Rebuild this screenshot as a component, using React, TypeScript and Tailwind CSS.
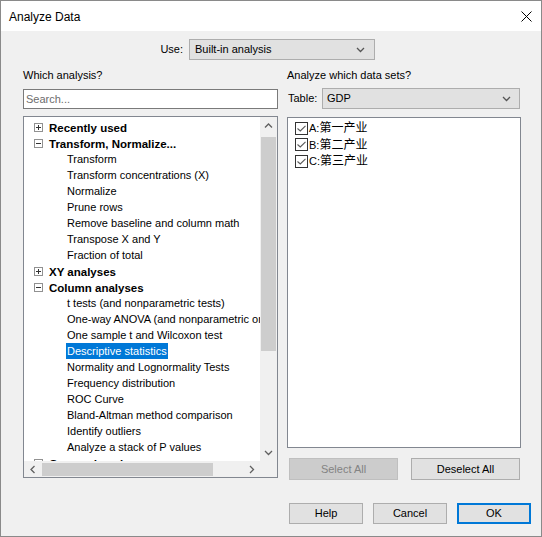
import React from "react";

const font = "font-['Liberation_Sans','Noto_Sans_CJK_SC',sans-serif]";

function Chevron({ dir = "down", className = "" }: { dir?: "down" | "up" | "left" | "right"; className?: string }) {
  const paths: Record<string, string> = {
    down: "M1 1 L4.5 4.5 L8 1",
    up: "M1 4.5 L4.5 1 L8 4.5",
    left: "M4.5 1 L1 4.5 L4.5 8",
    right: "M1 1 L4.5 4.5 L1 8",
  };
  const horiz = dir === "left" || dir === "right";
  return (
    <svg width={horiz ? 6 : 9} height={horiz ? 9 : 6} viewBox={horiz ? "0 0 6 9" : "0 0 9 6"} className={className}>
      <path d={paths[dir]} fill="none" stroke="currentColor" strokeWidth="1.3" />
    </svg>
  );
}

function Expander({ open }: { open: boolean }) {
  return (
    <span className="w-[9px] h-[9px] border border-[#919191] bg-white flex items-center justify-center relative">
      <span className="absolute w-[5px] h-px bg-[#333]" />
      {!open && <span className="absolute w-px h-[5px] bg-[#333]" />}
    </span>
  );
}

function Checkbox() {
  return (
    <span className="w-[13px] h-[13px] border border-[#333] bg-white flex items-center justify-center">
      <svg width="9" height="7" viewBox="0 0 9 7">
        <path d="M0.5 3.5 L3.3 6 L8.5 0.8" fill="none" stroke="#5a5a5a" strokeWidth="1.1" />
      </svg>
    </span>
  );
}

const tree: { label: string; kind: "open" | "closed" | "leaf"; selected?: boolean }[] = [
  { label: "Recently used", kind: "closed" },
  { label: "Transform, Normalize...", kind: "open" },
  { label: "Transform", kind: "leaf" },
  { label: "Transform concentrations (X)", kind: "leaf" },
  { label: "Normalize", kind: "leaf" },
  { label: "Prune rows", kind: "leaf" },
  { label: "Remove baseline and column math", kind: "leaf" },
  { label: "Transpose X and Y", kind: "leaf" },
  { label: "Fraction of total", kind: "leaf" },
  { label: "XY analyses", kind: "closed" },
  { label: "Column analyses", kind: "open" },
  { label: "t tests (and nonparametric tests)", kind: "leaf" },
  { label: "One-way ANOVA (and nonparametric or mixed)", kind: "leaf" },
  { label: "One sample t and Wilcoxon test", kind: "leaf" },
  { label: "Descriptive statistics", kind: "leaf", selected: true },
  { label: "Normality and Lognormality Tests", kind: "leaf" },
  { label: "Frequency distribution", kind: "leaf" },
  { label: "ROC Curve", kind: "leaf" },
  { label: "Bland-Altman method comparison", kind: "leaf" },
  { label: "Identify outliers", kind: "leaf" },
  { label: "Analyze a stack of P values", kind: "leaf" },
  { label: "Grouped analyses", kind: "closed" },
];

const dataSets = [
  { key: "A:", name: "第一产业" },
  { key: "B:", name: "第二产业" },
  { key: "C:", name: "第三产业" },
];

export default function App() {
  return (
    <div className={`${font} text-[11px] text-black w-[542px] h-[537px] bg-[#f0f0f0] border border-[#8a8a8a] flex flex-col overflow-hidden`}>
      {/* title bar */}
      <div className="h-[30px] bg-white flex items-center justify-between pl-[8px] pr-[9px] shrink-0">
        <span className="text-[12px] mt-[1px]">Analyze Data</span>
        <svg width="11" height="11" viewBox="0 0 11 11">
          <path d="M0.5 0.5 L10.5 10.5 M10.5 0.5 L0.5 10.5" stroke="#000" strokeWidth="1" />
        </svg>
      </div>

      <div className="flex flex-col pl-[22px]">
        {/* use row */}
        <div className="mt-[8px] h-[21px] flex items-center">
          <span className="w-[160px] text-right mr-[6px]">Use:</span>
          <div className="w-[186px] h-[21px] bg-[#e1e1e1] border border-[#adadad] flex items-center justify-between pl-[5px] pr-[9px]">
            <span>Built-in analysis</span>
            <Chevron className="text-[#555]" />
          </div>
        </div>

        <div className="flex mt-[8px]">
          {/* left column */}
          <div className="w-[255px] flex flex-col">
            <div className="h-[14px] leading-[14px]">Which analysis?</div>
            <div className="mt-[7px] h-[20px] bg-white border border-[#7a7a7a] flex items-center pl-[2px] text-[#6d6d6d]">
              Search...
            </div>
            <div className="mt-[7px] h-[362px] bg-white border border-[#828790] flex flex-col">
              <div className="flex h-[344px]">
                <div className="flex-1 overflow-hidden pt-[2px]">
                  {tree.map((row) => (
                    <div key={row.label} className="h-[16px] flex items-center whitespace-nowrap">
                      {row.kind === "leaf" ? (
                        <span
                          className={`ml-[42px] px-[1px] h-[16px] leading-[16px] ${
                            row.selected ? "bg-[#0078d7] text-white" : ""
                          }`}
                        >
                          {row.label}
                        </span>
                      ) : (
                        <>
                          <span className="ml-[10px] mr-[6px] mt-[1px]">
                            <Expander open={row.kind === "open"} />
                          </span>
                          <span className="font-bold text-[11.5px] leading-[16px] mt-[1px]">{row.label}</span>
                        </>
                      )}
                    </div>
                  ))}
                </div>
                {/* vertical scrollbar */}
                <div className="w-[17px] bg-[#f0f0f0] flex flex-col">
                  <div className="h-[17px] flex items-center justify-center text-[#606060]">
                    <Chevron dir="up" />
                  </div>
                  <div className="mt-[3px] h-[214px] mx-[1px] bg-[#cdcdcd]" />
                  <div className="flex-1" />
                  <div className="h-[17px] flex items-center justify-center text-[#606060]">
                    <Chevron dir="down" />
                  </div>
                </div>
              </div>
              {/* horizontal scrollbar */}
              <div className="flex h-[16px]">
                <div className="flex-1 bg-[#f0f0f0] flex items-center">
                  <div className="w-[17px] flex items-center justify-center text-[#606060]">
                    <Chevron dir="left" />
                  </div>
                  <div className="w-[171px] h-[13px] bg-[#cdcdcd] ml-[1px]" />
                  <div className="flex-1" />
                  <div className="w-[17px] flex items-center justify-center text-[#606060]">
                    <Chevron dir="right" />
                  </div>
                </div>
                <div className="w-[17px] bg-[#f0f0f0]" />
              </div>
            </div>
          </div>

          {/* right column */}
          <div className="ml-[9px] w-[234px] flex flex-col">
            <div className="h-[14px] leading-[14px]">Analyze which data sets?</div>
            <div className="mt-[6px] h-[21px] flex items-center">
              <span className="w-[35px] pl-[1px]">Table:</span>
              <div className="flex-1 h-[21px] mr-[1px] bg-[#e1e1e1] border border-[#adadad] flex items-center justify-between pl-[4px] pr-[8px]">
                <span>GDP</span>
                <Chevron className="text-[#555]" />
              </div>
            </div>
            <div className="mt-[8px] h-[331px] bg-white border border-[#828790] pt-[2px] pl-[7px]">
              {dataSets.map((d) => (
                <div key={d.key} className="h-[16.5px] flex items-center">
                  <Checkbox />
                  <span className="ml-[1px]">{d.key}</span>
                  <span className="text-[12px]">{d.name}</span>
                </div>
              ))}
            </div>
            <div className="mt-[10px] flex justify-between pl-[2px] pr-[1px]">
              <div className="w-[109px] h-[22px] bg-[#cccccc] border border-[#bfbfbf] text-[#838383] flex items-center justify-center">
                Select All
              </div>
              <div className="w-[109px] h-[22px] bg-[#e1e1e1] border border-[#adadad] flex items-center justify-center">
                Deselect All
              </div>
            </div>
          </div>
        </div>

        {/* bottom buttons */}
        <div className="mt-[23px] flex gap-[10px] pl-[266px]">
          <div className="w-[74px] h-[21px] bg-[#e1e1e1] border border-[#adadad] flex items-center justify-center">Help</div>
          <div className="w-[74px] h-[21px] bg-[#e1e1e1] border border-[#adadad] flex items-center justify-center">Cancel</div>
          <div className="w-[74px] h-[21px] bg-[#e1e1e1] border-2 border-[#0078d7] flex items-center justify-center">OK</div>
        </div>
      </div>
    </div>
  );
}
